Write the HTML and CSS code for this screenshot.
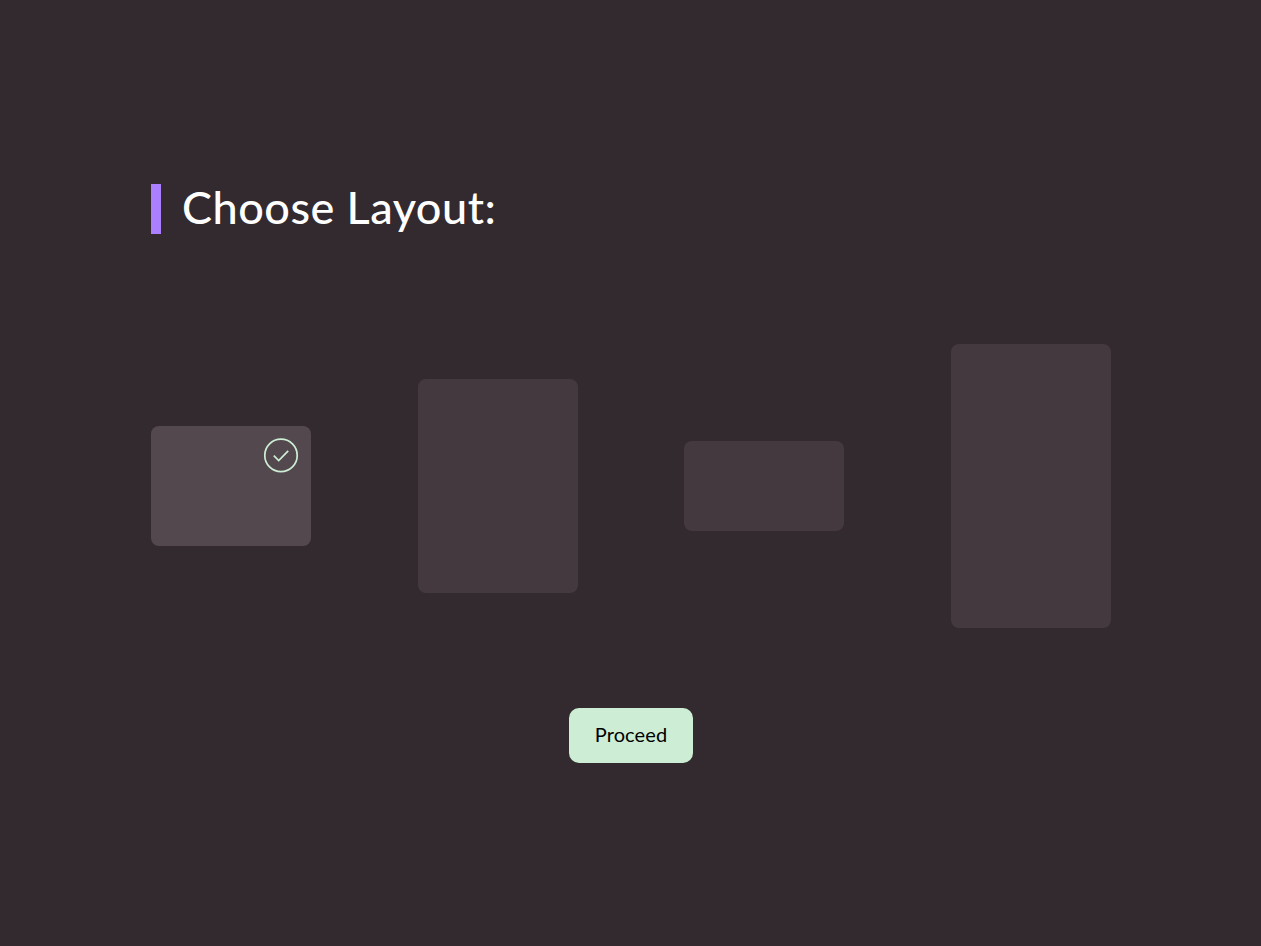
FILE: index.html
```html
<!DOCTYPE html>
<html lang="en">
<head>
    <meta charset="UTF-8">
    <meta name="viewport" content="width=device-width, initial-scale=1.0">
    <title>Choose Layout</title>
    <link rel="stylesheet" href="styles.css">
</head>
<body>
    <div class="container">
        <h1 class="title">Choose Layout:</h1>

        <div class="layouts">
            <div class="layout layout-landscape selected">
                <svg class="check" width="36" height="36" viewBox="0 0 36 36" fill="none">
                    <circle cx="18" cy="18.4" r="16.2" stroke="#cdeed4" stroke-width="1.7"/>
                    <path d="M10.8 18.7l4.9 4.9 9.5-9.8" stroke="#cdeed4" stroke-width="1.7"/>
                </svg>
            </div>
            <div class="layout layout-portrait"></div>
            <div class="layout layout-wide"></div>
            <div class="layout layout-tall"></div>
        </div>

        <div class="actions">
            <button class="proceed" type="button">Proceed</button>
        </div>
    </div>
</body>
</html>
```

FILE: styles.css
```css
body {
    margin: 0;
    padding-left: 1px;
    height: 100vh;
    display: flex;
    justify-content: center;
    align-items: center;
    background-color: #332a2f;
    font-family: Lato, "Noto Sans", sans-serif;
}

.container {
    width: 960px;
}

.title {
    margin: 0 0 110px;
    height: 50px;
    line-height: 47px;
    padding-left: 21px;
    border-left: 10px solid #ab7fff;
    color: #ffffff;
    font-size: 45px;
    font-weight: 500;
    letter-spacing: 0.5px;
}

.layouts {
    display: flex;
    justify-content: space-between;
    align-items: center;
    margin-bottom: 80px;
}

.layout {
    position: relative;
    width: 160px;
    border-radius: 8px;
    background-color: #43393e;
}

.layout.selected {
    background-color: #54484f;
}

.layout-landscape {
    height: 120px;
}

.layout-portrait {
    height: 214px;
}

.layout-wide {
    height: 90px;
}

.layout-tall {
    height: 284px;
}

.check {
    position: absolute;
    top: 11px;
    right: 12px;
}

.actions {
    display: flex;
    justify-content: center;
}

.proceed {
    width: 124px;
    height: 55px;
    padding: 0 0 2px;
    border: none;
    border-radius: 10px;
    background-color: #cdeed4;
    color: #000000;
    font-family: inherit;
    font-size: 20px;
    letter-spacing: 0.1px;
    cursor: pointer;
}
```
